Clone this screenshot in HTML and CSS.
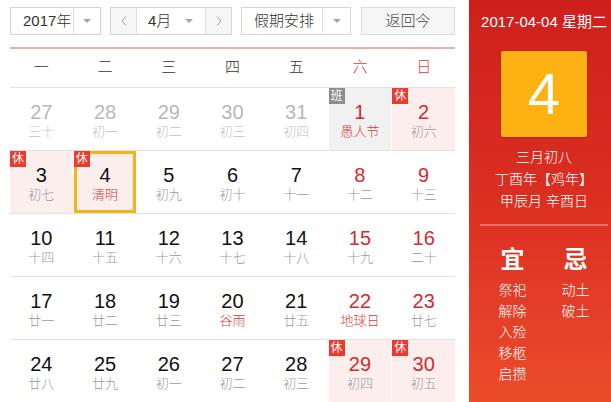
FILE: index.html
```html
<!DOCTYPE html>
<html lang="zh-CN">
<head>
<meta charset="utf-8">
<title>万年历</title>
<link rel="stylesheet" href="styles.css">
</head>
<body>
<div class="page">
  <div class="main">
    <div class="toolbar">
      <div class="sel year">
        <div class="sel-text">2017年</div>
        <div class="sel-arrow"><span class="tri"></span></div>
      </div>
      <div class="sel month">
        <div class="nav prev"><svg width="6" height="10" viewBox="0 0 6 10"><polyline points="5,0.5 1,5 5,9.5" fill="none" stroke="#9a9a9a" stroke-width="1"/></svg></div>
        <div class="month-mid"><span>4月</span><span class="tri"></span></div>
        <div class="nav next"><svg width="6" height="10" viewBox="0 0 6 10"><polyline points="1,0.5 5,5 1,9.5" fill="none" stroke="#9a9a9a" stroke-width="1"/></svg></div>
      </div>
      <div class="sel holiday-sel">
        <div class="sel-text">假期安排</div>
        <div class="sel-arrow wide"><span class="tri"></span></div>
      </div>
      <div class="btn-today">返回今</div>
    </div>
    <div class="redline"></div>
    <div class="week">
      <div>一</div><div>二</div><div>三</div><div>四</div><div>五</div><div class="we">六</div><div class="we">日</div>
    </div>

    <div class="row">
      <div class="cell other"><div class="num">27</div><div class="lunar">三十</div></div>
      <div class="cell other"><div class="num">28</div><div class="lunar">初一</div></div>
      <div class="cell other"><div class="num">29</div><div class="lunar">初二</div></div>
      <div class="cell other"><div class="num">30</div><div class="lunar">初三</div></div>
      <div class="cell other"><div class="num">31</div><div class="lunar">初四</div></div>
      <div class="cell work weekend"><span class="badge gray">班</span><div class="num">1</div><div class="lunar fest">愚人节</div></div>
      <div class="cell rest weekend"><span class="badge">休</span><div class="num">2</div><div class="lunar">初六</div></div>
    </div>

    <div class="row">
      <div class="cell rest"><span class="badge">休</span><div class="num">3</div><div class="lunar">初七</div></div>
      <div class="cell rest today"><span class="badge">休</span><div class="num">4</div><div class="lunar fest">清明</div></div>
      <div class="cell"><div class="num">5</div><div class="lunar">初九</div></div>
      <div class="cell"><div class="num">6</div><div class="lunar">初十</div></div>
      <div class="cell"><div class="num">7</div><div class="lunar">十一</div></div>
      <div class="cell weekend"><div class="num">8</div><div class="lunar">十二</div></div>
      <div class="cell weekend"><div class="num">9</div><div class="lunar">十三</div></div>
    </div>

    <div class="row">
      <div class="cell"><div class="num">10</div><div class="lunar">十四</div></div>
      <div class="cell"><div class="num">11</div><div class="lunar">十五</div></div>
      <div class="cell"><div class="num">12</div><div class="lunar">十六</div></div>
      <div class="cell"><div class="num">13</div><div class="lunar">十七</div></div>
      <div class="cell"><div class="num">14</div><div class="lunar">十八</div></div>
      <div class="cell weekend"><div class="num">15</div><div class="lunar">十九</div></div>
      <div class="cell weekend"><div class="num">16</div><div class="lunar">二十</div></div>
    </div>

    <div class="row">
      <div class="cell"><div class="num">17</div><div class="lunar">廿一</div></div>
      <div class="cell"><div class="num">18</div><div class="lunar">廿二</div></div>
      <div class="cell"><div class="num">19</div><div class="lunar">廿三</div></div>
      <div class="cell"><div class="num">20</div><div class="lunar fest">谷雨</div></div>
      <div class="cell"><div class="num">21</div><div class="lunar">廿五</div></div>
      <div class="cell weekend"><div class="num">22</div><div class="lunar fest">地球日</div></div>
      <div class="cell weekend"><div class="num">23</div><div class="lunar">廿七</div></div>
    </div>

    <div class="row">
      <div class="cell"><div class="num">24</div><div class="lunar">廿八</div></div>
      <div class="cell"><div class="num">25</div><div class="lunar">廿九</div></div>
      <div class="cell"><div class="num">26</div><div class="lunar">初一</div></div>
      <div class="cell"><div class="num">27</div><div class="lunar">初二</div></div>
      <div class="cell"><div class="num">28</div><div class="lunar">初三</div></div>
      <div class="cell rest weekend"><span class="badge">休</span><div class="num">29</div><div class="lunar">初四</div></div>
      <div class="cell rest weekend"><span class="badge">休</span><div class="num">30</div><div class="lunar">初五</div></div>
    </div>
  </div>

  <div class="side">
    <div class="date">2017-04-04 星期二</div>
    <div class="bigday">4</div>
    <div class="info">
      <div>三月初八</div>
      <div>丁酉年【鸡年】</div>
      <div>甲辰月 辛酉日</div>
    </div>
    <div class="sep"></div>
    <div class="yiji">
      <div class="col">
        <div class="col-title">宜</div>
        <div class="items"><div>祭祀</div><div>解除</div><div>入殓</div><div>移柩</div><div>启攒</div></div>
      </div>
      <div class="col">
        <div class="col-title">忌</div>
        <div class="items"><div>动土</div><div>破土</div></div>
      </div>
    </div>
  </div>
</div>
</body>
</html>
```

FILE: styles.css
```css
html, body {
  margin: 0;
  padding: 0;
}

body {
  width: 611px;
  height: 402px;
  overflow: hidden;
  background: #fff;
  color: #333;
  font-family: "Liberation Sans", "Noto Sans CJK SC", sans-serif;
}

.page {
  display: flex;
  height: 402px;
}

.main {
  flex: none;
  width: 445px;
  padding: 7px 0 0 10px;
}

/* toolbar */
.toolbar {
  display: flex;
  height: 28px;
}

.sel {
  box-sizing: border-box;
  height: 28px;
  border: 1px solid #d4d4d4;
  display: flex;
  background: #fff;
  font-size: 15px;
  color: #333;
}

.year {
  width: 91px;
  margin-right: 9px;
}

.sel-text {
  flex: 1;
  padding-left: 12px;
  line-height: 26px;
  white-space: nowrap;
  font-weight: 300;
}

.sel-arrow {
  width: 26px;
  border-left: 1px solid #e0e0e0;
  display: flex;
  align-items: center;
  justify-content: center;
}

.sel-arrow.wide {
  width: 27px;
}

.tri {
  display: inline-block;
  width: 0;
  height: 0;
  border-left: 4px solid transparent;
  border-right: 4px solid transparent;
  border-top: 4px solid #a5a5a5;
}

.month {
  width: 122px;
  margin-right: 9px;
}

.nav {
  width: 25px;
  background: #f6f6f6;
  display: flex;
  align-items: center;
  justify-content: center;
}

.prev {
  border-right: 1px solid #e0e0e0;
}

.next {
  border-left: 1px solid #e0e0e0;
}

.month-mid {
  flex: 1;
  display: flex;
  align-items: center;
  justify-content: space-between;
  padding: 0 12px 0 11px;
  line-height: 26px;
  font-weight: 300;
}

.holiday-sel {
  width: 110px;
  margin-right: 10px;
}

.btn-today {
  box-sizing: border-box;
  width: 94px;
  height: 28px;
  border: 1px solid #dcdcdc;
  background: #f6f6f6;
  text-align: center;
  line-height: 26px;
  font-size: 15px;
  font-weight: 300;
  color: #444;
}

.redline {
  height: 2px;
  margin-top: 12px;
  background: #f5aaa4;
}

/* week header */
.week {
  display: grid;
  grid-template-columns: repeat(7, 1fr);
  column-gap: 1px;
  height: 38px;
  line-height: 36px;
  font-size: 15px;
  font-weight: 300;
  text-align: center;
  color: #333;
  border-bottom: 1px solid #e2e2e2;
}

.week .we {
  color: #e0403a;
}

/* rows */
.row {
  display: grid;
  grid-template-columns: repeat(7, 1fr);
  column-gap: 1px;
  height: 62px;
  border-bottom: 1px solid #e2e2e2;
}

.cell {
  position: relative;
  box-sizing: border-box;
  padding-top: 12px;
  text-align: center;
}

.num {
  font-size: 20px;
  line-height: 24px;
  color: #111;
}

.lunar {
  font-size: 13px;
  line-height: 16px;
  font-weight: 300;
  color: #999;
}

.lunar.fest {
  color: #dc3a3a;
}

.weekend .num {
  color: #d42a2e;
}

.other .num {
  color: #b8b8b8;
}

.other .lunar {
  color: #c2c2c2;
}

.rest {
  background: #fdeeee;
}

.work {
  background: #f1f1f1;
}

.today {
  border: 3px solid #f5b31a;
  padding-top: 9px;
}

.badge {
  position: absolute;
  top: 0;
  left: 0;
  width: 16px;
  height: 16px;
  background: #ee3a2e;
  color: #fff;
  font-size: 12px;
  line-height: 16px;
  text-align: center;
}

.today .badge {
  top: -3px;
  left: -3px;
}

.badge.gray {
  background: #8d8d8d;
}

/* side panel */
.side {
  flex: none;
  width: 150px;
  margin-left: 14px;
  background: linear-gradient(180deg, #cf1f1b 0%, #db2f22 50%, #ec4b2c 100%);
  color: #fff;
  text-align: center;
}

.date {
  padding-top: 12px;
  font-size: 15px;
  line-height: 20px;
  white-space: nowrap;
}

.bigday {
  width: 86px;
  height: 86px;
  margin: 19px auto 0;
  background: #fbb212;
  border-radius: 2px;
  font-size: 58px;
  line-height: 86px;
  color: #fff;
  box-shadow: 0 1px 2px rgba(120, 0, 0, 0.35);
}

.info {
  margin-top: 9px;
  font-size: 14px;
  line-height: 22px;
  font-weight: 300;
  white-space: nowrap;
}

.sep {
  height: 2px;
  margin: 12px 11px 0;
  background: rgba(255, 255, 255, 0.3);
}

.yiji {
  display: flex;
  justify-content: center;
  margin-top: 19px;
}

.col {
  width: 63px;
}

.col-title {
  font-size: 24px;
  line-height: 30px;
  font-weight: bold;
}

.items {
  margin-top: 5px;
  font-size: 14px;
  line-height: 21px;
  font-weight: 300;
}
```
